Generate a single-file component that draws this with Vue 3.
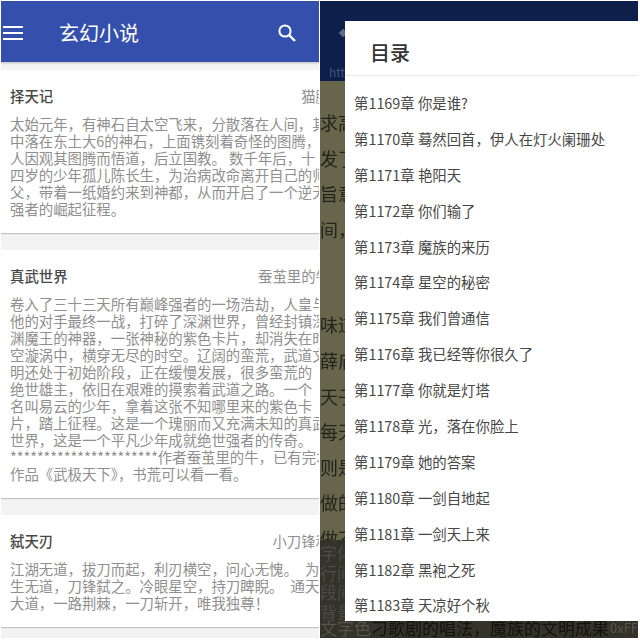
<script setup>
const novels = [
  {
    title: '择天记',
    author: '猫腻',
    lines: [
      '太始元年，有神石自太空飞来，分散落在人间，其',
      '中落在东土大6的神石，上面镌刻着奇怪的图腾，',
      '人因观其图腾而悟道，后立国教。 数千年后，十',
      '四岁的少年孤儿陈长生，为治病改命离开自己的师',
      '父，带着一纸婚约来到神都，从而开启了一个逆天',
      '强者的崛起征程。'
    ]
  },
  {
    title: '真武世界',
    author: '蚕茧里的牛',
    lines: [
      '卷入了三十三天所有巅峰强者的一场浩劫，人皇与',
      '他的对手最终一战，打碎了深渊世界，曾经封镇深',
      '渊魔王的神器，一张神秘的紫色卡片，却消失在时',
      '空漩涡中，横穿无尽的时空。辽阔的蛮荒，武道文',
      '明还处于初始阶段，正在缓慢发展，很多蛮荒的',
      '绝世雄主，依旧在艰难的摸索着武道之路。一个',
      '名叫易云的少年，拿着这张不知哪里来的紫色卡',
      '片，踏上征程。这是一个瑰丽而又充满未知的真武',
      '世界，这是一个平凡少年成就绝世强者的传奇。',
      '**********************作者蚕茧里的牛，已有完本',
      '作品《武极天下》，书荒可以看一看。'
    ]
  },
  {
    title: '弑天刃',
    author: '小刀锋利',
    lines: [
      '江湖无道，拔刀而起，利刃横空，问心无愧。　为',
      '生无道，刀锋弑之。冷眼星空，持刀睥睨。　通天',
      '大道，一路荆棘，一刀斩开，唯我独尊！'
    ]
  }
]

const chapters = [
  '第1169章 你是谁?',
  '第1170章 蓦然回首，伊人在灯火阑珊处',
  '第1171章 艳阳天',
  '第1172章 你们输了',
  '第1173章 魔族的来历',
  '第1174章 星空的秘密',
  '第1175章 我们曾通信',
  '第1176章 我已经等你很久了',
  '第1177章 你就是灯塔',
  '第1178章 光，落在你脸上',
  '第1179章 她的答案',
  '第1180章 一剑自地起',
  '第1181章 一剑天上来',
  '第1182章 黑袍之死',
  '第1183章 天凉好个秋'
]

const paragraphs = [
  ['求高', '发了', '旨意', '间，'],
  ['味道', '薛庙', '天子', '每天', '则是', '做的', '做不']
]
const settings = ['字体', '行间', '段间', '背景']
</script>

<template>
  <div class="page">
    <section class="panel shelf">
      <header class="appbar">
        <svg class="menu" viewBox="0 0 20 14" width="20" height="14">
          <path d="M0 1h20M0 7h20M0 13h20" stroke="#fff" stroke-width="2" fill="none" />
        </svg>
        <h1 class="appbar-title">玄幻小说</h1>
        <svg class="search" viewBox="0 0 18 18" width="18" height="18">
          <circle cx="7" cy="7" r="5.6" stroke="#fff" stroke-width="2" fill="none" />
          <path d="M11 11 17 17" stroke="#fff" stroke-width="2.4" fill="none" />
        </svg>
      </header>
      <div class="list">
        <article v-for="novel in novels" :key="novel.title" class="card">
          <div class="card-head">
            <span class="card-title">{{ novel.title }}</span>
            <span class="card-author">{{ novel.author }}</span>
          </div>
          <p class="card-body">
            <span v-for="line in novel.lines" :key="line" class="line">{{ line }}</span>
          </p>
        </article>
      </div>
    </section>

    <section class="panel reader">
      <div class="reader-bar">
        <span class="back"></span>
        <span class="url">http</span>
      </div>
      <div class="reader-text">
        <div v-for="(group, g) in paragraphs" :key="g" class="reader-group">
          <div v-for="line in group" :key="line" class="reader-line">{{ line }}</div>
        </div>
      </div>
      <div class="reader-settings">
        <div class="setting-labels">
          <div v-for="item in settings" :key="item" class="setting">{{ item }}</div>
        </div>
        <div class="reader-last">
          <span><span class="last-label">文字色</span>刁歌剧的唱法，魔族的文明成果</span>
          <span class="hex">0xFF</span>
        </div>
      </div>

      <div class="dialog">
        <div class="dialog-title">目录</div>
        <ul class="chapters">
          <li v-for="chapter in chapters" :key="chapter" class="chapter">{{ chapter }}</li>
        </ul>
      </div>
    </section>
  </div>
</template>

<style>
html, body {
  margin: 0;
  background: #fff;
}
</style>

<style scoped>
.page {
  display: flex;
  width: 640px;
  height: 640px;
  gap: 1px;
  padding: 1px 0 0 1px;
  box-sizing: border-box;
  overflow: hidden;
  font-family: "Noto Sans CJK SC", "Liberation Sans", sans-serif;
  filter: blur(0.4px);
}

.panel {
  position: relative;
  overflow: hidden;
  flex: none;
  width: 318px;
  height: 637px;
}

.shelf {
  display: flex;
  flex-direction: column;
  background: #f3f3f3;
}

.appbar {
  position: relative;
  display: flex;
  align-items: center;
  flex: none;
  height: 61px;
  padding-top: 3px;
  box-sizing: border-box;
  background: #3450ac;
  box-shadow: 0 1px 2px rgba(0, 0, 0, 0.25);
}

.menu {
  margin-left: 2px;
  flex: none;
}

.appbar-title {
  margin: 0 0 0 36px;
  font-size: 20px;
  font-weight: 400;
  color: #fff;
  line-height: 1;
}

.search {
  margin-left: 139px;
  flex: none;
}

.list {
  display: flex;
  flex-direction: column;
  gap: 17px;
  padding-top: 8px;
}

.card {
  width: 318px;
  padding: 16px 0 16px 9px;
  box-sizing: border-box;
  background: #fff;
  box-shadow: 0 1px 1px rgba(0, 0, 0, 0.2);
}

.card-head {
  display: flex;
  justify-content: space-between;
  width: 320px;
  font-size: 14.4px;
  line-height: 19px;
}

.card-title {
  color: #484848;
  font-weight: 500;
}

.card-author {
  color: #8f8f8f;
}

.card-body {
  margin: 10px 0 0;
  font-size: 14.4px;
  line-height: 17px;
  color: #8f8f8f;
}

.line {
  display: block;
  white-space: pre;
}

.reader {
  display: flex;
  flex-direction: column;
  background: #67664c;
}

.reader-bar {
  position: relative;
  flex: none;
  height: 80px;
  background: #0f1f4c;
}

.back {
  position: absolute;
  left: 20px;
  top: 29px;
  width: 6px;
  height: 6px;
  background: #5f6986;
  transform: rotate(45deg);
}

.url {
  position: absolute;
  left: 9px;
  top: 63px;
  font-size: 12px;
  line-height: 16px;
  color: #4b5375;
}

.reader-text {
  flex: none;
  width: 25px;
  height: 459px;
  padding-top: 24px;
  box-sizing: border-box;
  overflow: hidden;
}

.reader-group + .reader-group {
  margin-top: 60px;
}

.reader-line {
  height: 35.6px;
  font-size: 18px;
  line-height: 35.6px;
  color: #23231b;
  white-space: nowrap;
}

.reader-settings {
  flex: 1;
  background: #33332a;
}

.setting-labels {
  width: 25px;
  padding-top: 3px;
  overflow: hidden;
}

.setting {
  height: 19.5px;
  font-size: 17px;
  line-height: 19.5px;
  color: #4c4c44;
  white-space: nowrap;
}

.reader-last {
  display: flex;
  justify-content: space-between;
  margin-top: -1px;
  font-size: 17px;
  line-height: 16px;
  color: #12120e;
  white-space: nowrap;
}

.last-label {
  color: #55554b;
}

.hex {
  color: #56564c;
  font-size: 13px;
}

.dialog {
  position: absolute;
  left: 25px;
  top: 20px;
  width: 293px;
  height: 600px;
  background: #fff;
}

.dialog-title {
  padding-left: 25px;
  height: 54px;
  font-size: 20px;
  font-weight: 500;
  line-height: 63px;
  color: #333;
  border-bottom: 1px solid #e8e8e8;
}

.chapters {
  list-style: none;
  margin: 0;
  padding: 9px 0 0 9px;
}

.chapter {
  height: 35.9px;
  font-size: 14.4px;
  line-height: 35.9px;
  color: #474747;
  white-space: nowrap;
}
</style>
